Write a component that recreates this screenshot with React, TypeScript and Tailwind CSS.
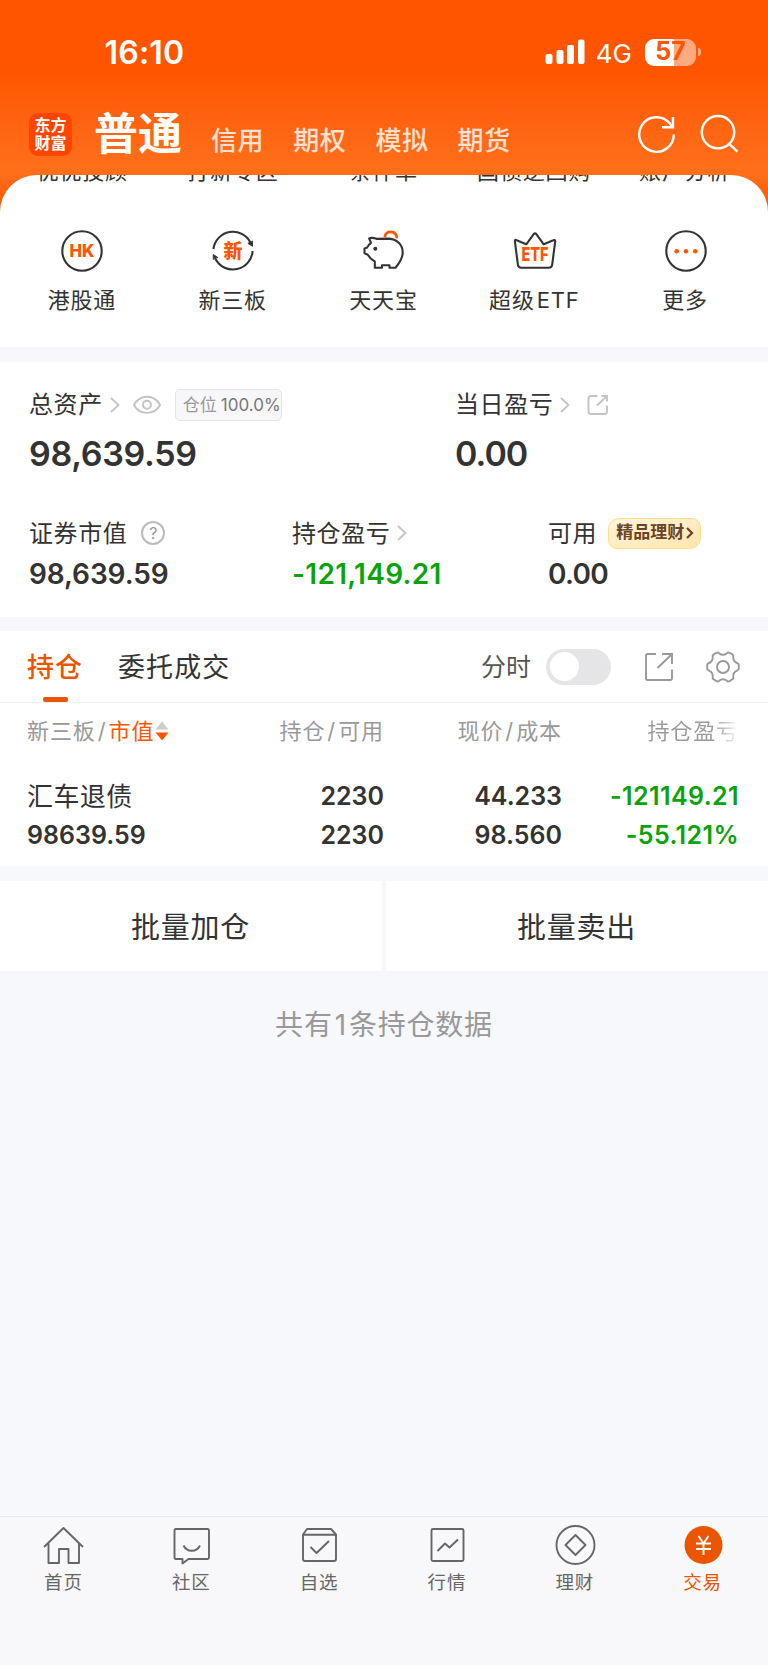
import type { ReactNode } from "react";

const accountTabs = ["信用", "期权", "模拟", "期货"];
const hiddenRow = ["优优投顾", "打新专区", "条件单", "国债逆回购", "账户分析"];

function StatusBar() {
  return (
    <div className="flex h-[104px] items-center pr-[67px] pl-[104.5px] text-white">
      <span className="pt-0.5 text-[32px] leading-10 font-semibold tracking-[0.2px]">16:10</span>
      <svg className="ml-auto" width="40" height="26" viewBox="0 0 40 26" fill="currentColor">
        <rect x="0.5" y="15" width="7" height="10" rx="2" />
        <rect x="11.5" y="11" width="7" height="14" rx="2" />
        <rect x="22" y="6" width="7" height="19" rx="2" />
        <rect x="33" y="0.5" width="6.5" height="24.5" rx="2" />
      </svg>
      <span className="ml-[11px] pt-[3px] text-[26px] leading-8">4G</span>
      <div className="ml-[13px] flex h-[27px] w-[51px] items-center justify-center rounded-[9px] bg-linear-to-r from-white from-57% to-white/50 to-57% text-[25px] font-bold text-[#ff5500]">
        57
      </div>
      <div className="ml-0.5 h-2 w-[3px] rounded-r-full bg-white/50" />
    </div>
  );
}

function Header() {
  return (
    <header className="h-[175px] bg-linear-to-b from-[#ff5500] from-40% to-[#ff6e19] to-95%">
      <StatusBar />
      <div className="flex h-[60px] items-center pr-[28px] pl-[29px] text-white">
        <div className="flex size-[43px] flex-col items-center justify-center rounded-[9px] bg-[#ff4400] text-[16px] leading-[18px] font-bold">
          <span>东方</span>
          <span>财富</span>
        </div>
        <h1 className="ml-[22px] text-[44px] leading-[44px] font-bold">普通</h1>
        <nav className="ml-[29px] flex gap-[29px] pt-[13px]">
          {accountTabs.map((t) => (
            <span key={t} className="text-[26px] leading-[30px] font-medium tracking-[0.6px] text-white/80">
              {t}
            </span>
          ))}
        </nav>
        <svg className="ml-auto" width="40" height="40" viewBox="0 0 40 40" fill="none" stroke="currentColor" strokeWidth="2.4">
          <path d="M36.8 20.5A17.3 17.3 0 1 1 32.3 8.9L36 13.2" />
          <path d="M36 3v10.2H25" />
        </svg>
        <svg className="ml-[23px]" width="40" height="40" viewBox="0 0 40 40" fill="none" stroke="currentColor" strokeWidth="2.4">
          <circle cx="18" cy="18.2" r="16.2" />
          <path d="M29.2 29.8 37.4 37.6" />
        </svg>
      </div>
    </header>
  );
}

function EntryIcon({ children }: { children: ReactNode }) {
  return (
    <svg width="44" height="44" viewBox="0 0 44 44" fill="none" stroke="#333" strokeWidth="2.1" strokeLinejoin="round" strokeLinecap="round">
      {children}
    </svg>
  );
}

const entries: { label: ReactNode; icon: ReactNode }[] = [
  {
    label: "港股通",
    icon: (
      <EntryIcon>
        <circle cx="22" cy="22" r="19.7" />
        <text x="22" y="28.4" textAnchor="middle" fontSize="18" fontWeight="800" fill="#ff5500" stroke="none" textLength="25" lengthAdjust="spacingAndGlyphs">
          HK
        </text>
      </EntryIcon>
    ),
  },
  {
    label: "新三板",
    icon: (
      <EntryIcon>
        <path d="M2.4 20A19.7 19.7 0 0 1 39.5 13.5" strokeLinecap="butt" />
        <path d="M41.6 22A19.7 19.7 0 0 1 4.5 30" strokeLinecap="butt" />
        <path d="m37.2 14.5 4.3 2.8V12.5z" fill="#333" strokeWidth="1" />
        <path d="M2.3 30V25.5l4.2 2.8z" fill="#333" strokeWidth="1" />
        <text x="22" y="29" textAnchor="middle" fontSize="19" fontWeight="900" fill="#ff5500" stroke="none">
          新
        </text>
      </EntryIcon>
    ),
  },
  {
    label: "天天宝",
    icon: (
      <EntryIcon>
        <path d="M7.2 9.5C9.5 8.5 12 8.8 14.5 9.9L27 9.6C35.5 10.5 40.7 16 40.7 23.5C40.7 29 37.5 34 33.5 38.7H27.5V36.2H20V38.7H12.8V32.5C9.5 30.8 7.3 28.5 5.8 25.8L2.5 24.3V19.5L5.2 18.5C5.9 16.5 7 15.2 9 13.8Z" />
        <circle cx="13.3" cy="19.8" r="2" fill="#333" stroke="none" />
        <path d="M23 7.2C23.8 1.2 33.8 1.2 34.8 8.2" stroke="#ff5500" strokeWidth="2.8" />
      </EntryIcon>
    ),
  },
  {
    label: (
      <>
        超级<span className="ml-0.5">ETF</span>
      </>
    ),
    icon: (
      <EntryIcon>
        <path d="M1.9 12.3C1.7 11 2.7 10.6 3.6 11.2L13.3 15.3 20.7 5.2C21.5 4.1 22.5 4.1 23.3 5.2L30.7 15.3 40.4 11.2C41.5 10.7 42.4 11.3 42.2 12.5L39.2 35.6C38.9 37.8 38 38.8 35.8 38.8H8.3C6.1 38.8 5.2 37.8 4.9 35.6Z" />
        <text x="22" y="32" textAnchor="middle" fontSize="19" fontWeight="800" fill="#ff5500" stroke="none" textLength="27" lengthAdjust="spacingAndGlyphs">
          ETF
        </text>
      </EntryIcon>
    ),
  },
  {
    label: "更多",
    icon: (
      <EntryIcon>
        <circle cx="22" cy="22" r="19.7" />
        <g fill="#ff5500" stroke="none">
          <circle cx="12.7" cy="22.3" r="2.3" />
          <circle cx="22" cy="22.3" r="2.3" />
          <circle cx="31.3" cy="22.3" r="2.3" />
        </g>
      </EntryIcon>
    ),
  },
];

function QuickEntries() {
  return (
    <div className="bg-linear-to-b from-[#ff6d18] to-[#ff5500] to-20%">
      <section className="h-[172px] overflow-hidden rounded-t-[37px] bg-white px-[7px]">
        <div className="-mt-[15px] grid grid-cols-5 pr-px text-center text-[22px] leading-[22px] tracking-[0.8px]">
          {hiddenRow.map((label) => (
            <span key={label} className="whitespace-nowrap">{label}</span>
          ))}
        </div>
        <div className="mt-[47px] grid grid-cols-5">
          {entries.map((e, i) => (
            <div key={i} className="flex flex-col items-center">
              {e.icon}
              <span className="mt-4 pr-px text-[22px] leading-[22px] tracking-[0.8px]">{e.label}</span>
            </div>
          ))}
        </div>
      </section>
    </div>
  );
}

function Chevron() {
  return (
    <svg width="10" height="16" viewBox="0 0 10 16" fill="none" stroke="#c4c4c4" strokeWidth="1.8">
      <path d="m1 1 7.5 7L1 15" />
    </svg>
  );
}

function Assets() {
  return (
    <section className="mt-[15px] h-[255px] bg-white px-[29px] pt-[27px]">
      <div className="flex">
        <div className="w-[426px]">
          <div className="flex h-8 items-center">
            <span className="text-[24px] tracking-[0.6px]">总资产</span>
            <span className="ml-[7px]"><Chevron /></span>
            <svg className="ml-[13px]" width="28" height="20" viewBox="0 0 28 20" fill="none" stroke="#c4c4c4" strokeWidth="1.9">
              <path d="M1 10C6.5-1 21.5-1 27 10C21.5 20.5 6.5 20.5 1 10Z" />
              <circle cx="14" cy="9.7" r="4" />
            </svg>
            <span className="ml-[14px] flex h-8 w-[107px] items-center rounded-[5px] border border-[#e4e4e8] bg-[#f7f7fa] pt-px pl-[7px] text-[17px] whitespace-nowrap text-[#999]">
              仓位<span className="ml-1 text-[#777]">100.0%</span>
            </span>
          </div>
          <div className="mt-[13px] text-[34px] leading-10 font-semibold tracking-[-0.3px]">98,639.59</div>
        </div>
        <div>
          <div className="flex h-8 items-center">
            <span className="text-[24px] tracking-[0.6px]">当日盈亏</span>
            <span className="ml-[7px]"><Chevron /></span>
            <svg className="ml-[17px]" width="22" height="22" viewBox="0 0 22 22" fill="none" stroke="#c4c4c4" strokeWidth="1.9">
              <path d="M10.5 2H4A2.5 2.5 0 0 0 1.5 4.5V17.5A2.5 2.5 0 0 0 4 20H17.5A2.5 2.5 0 0 0 20 17.5V11.5" />
              <path d="M10 11.5 20 2M14.5 2H20V7.5" />
            </svg>
          </div>
          <div className="mt-[13px] text-[34px] leading-10 font-semibold tracking-[-1px]">0.00</div>
        </div>
      </div>
      <div className="mt-[43px] flex">
        <div className="w-[263px]">
          <div className="flex h-8 items-center">
            <span className="pt-px text-[24px] tracking-[0.6px]">证券市值</span>
            <span className="ml-[14px] flex size-[24px] items-center justify-center rounded-full border-2 border-[#bbb] text-[16px] leading-none text-[#999]">?</span>
          </div>
          <div className="mt-[9px] text-[28px] leading-8 font-semibold tracking-[-0.1px]">98,639.59</div>
        </div>
        <div className="w-[256px]">
          <div className="flex h-8 items-center">
            <span className="pt-px text-[24px] tracking-[0.6px]">持仓盈亏</span>
            <span className="ml-[7px]"><Chevron /></span>
          </div>
          <div className="mt-[9px] text-[28px] leading-8 font-semibold tracking-[0.3px] text-[#0aa30a]">-121,149.21</div>
        </div>
        <div>
          <div className="flex h-8 items-center">
            <span className="pt-px text-[24px] tracking-[0.6px]">可用</span>
            <span className="ml-[11px] flex h-[31px] w-[93px] items-center rounded-[9px] rounded-tl-[11px] rounded-br-[11px] border-[1.5px] border-[#fbe08a] bg-linear-to-br from-[#fff3dc] to-[#ffe6ae] pl-[7px] text-[17px] font-bold whitespace-nowrap text-[#6b4423]">
              精品理财
              <svg className="ml-0.5" width="8" height="12" viewBox="0 0 8 12" fill="none" stroke="currentColor" strokeWidth="2.2">
                <path d="m1 1 5 5-5 5" />
              </svg>
            </span>
          </div>
          <div className="mt-[9px] text-[28px] leading-8 font-semibold tracking-[-0.7px]">0.00</div>
        </div>
      </div>
    </section>
  );
}

function Positions() {
  return (
    <section className="mt-[14px] h-[235px] bg-white">
      <div className="flex h-[72px] items-center border-b border-[#f0f0f2] pr-[28px] pl-[27px]">
        <div className="relative pt-0.5 text-[27px] leading-9 font-medium tracking-[1px] text-[#eb5500]">
          持仓
          <span className="absolute top-[49px] left-4 h-[5px] w-[25px] rounded-[2px] bg-[#eb5500]" />
        </div>
        <span className="ml-[35px] pt-0.5 text-[27px] leading-9 tracking-[1.1px]">委托成交</span>
        <span className="ml-auto pt-0.5 text-[25px] text-[#555]">分时</span>
        <span className="ml-[15px] flex h-9 w-[65px] items-center rounded-full bg-[#e5e5e7] px-1">
          <span className="size-[29px] rounded-full bg-white" />
        </span>
        <svg className="ml-[33px]" width="30" height="30" viewBox="0 0 30 30" fill="none" stroke="#999" strokeWidth="1.9">
          <path d="M12 2H3.5A1.5 1.5 0 0 0 2 3.5V26.5A1.5 1.5 0 0 0 3.5 28H26.5A1.5 1.5 0 0 0 28 26.5V17.5" />
          <path d="M13.5 16 28 2M18 2H28V12" />
        </svg>
        <svg className="ml-[32px]" width="34" height="34" viewBox="0 0 34 34" fill="none" stroke="#999" strokeWidth="1.9" strokeLinejoin="round">
          <path d="M13 3.2C15.5 5.2 18.5 5.2 21 3.2Q22 2 23.5 2.8L26.3 4.4Q27.8 5.3 27.3 7C27.1 10 28.5 12 31 13Q32.8 13.7 32.8 15V18.5Q32.8 20 31 20.7C28.5 21.8 27.1 24 27.3 26.5Q27.8 28.5 26.3 29.3L23.5 31.2Q22 32 21 30.8C18.5 28.8 15.5 28.8 13 30.8Q12 32 10.5 31.2L7.7 29.3Q6.2 28.5 6.7 26.5C6.9 24 5.5 21.8 3 20.7Q1.2 20 1.2 18.5V15Q1.2 13.7 3 13C5.5 12 6.9 10 6.7 7Q6.2 5.3 7.7 4.4L10.5 2.8Q12 2 13 3.2Z" />
          <circle cx="17" cy="17" r="6" />
        </svg>
      </div>
      <div className="grid grid-cols-[187px_170px_178px_177px] pt-3 pr-[29px] pl-[27px] text-[22px] leading-8 tracking-[0.9px] whitespace-nowrap text-[#999]">
        <span className="flex items-center">
          新三板<span className="mx-0.5">/</span><span className="text-[#ff5500]">市值</span>
          <svg className="ml-px" width="14" height="20" viewBox="0 0 14 20">
            <path d="M0.5 8.5 7 0.5 13.5 8.5Z" fill="#ccc" />
            <path d="M0.5 11.5H13.5L7 19.5Z" fill="#ff5500" />
          </svg>
        </span>
        <span className="text-right">持仓<span className="mx-0.5">/</span>可用</span>
        <span className="text-right">现价<span className="mx-0.5">/</span>成本</span>
        <span className="flex justify-end">
          <span className="bg-linear-to-r from-[#999] from-72% to-white to-100% bg-clip-text text-transparent">持仓盈亏</span>
        </span>
      </div>
      <div className="grid grid-cols-[187px_170px_178px_177px] pt-[30px] pr-[29px] pl-[27px] text-right text-[25px] leading-[39px] font-semibold">
        <div className="text-left">
          <div className="text-[26px] font-normal tracking-[0.4px]">汇车退债</div>
          <div>98639.59</div>
        </div>
        <div>
          <div>2230</div>
          <div>2230</div>
        </div>
        <div>
          <div>44.233</div>
          <div>98.560</div>
        </div>
        <div className="tracking-[0.4px] text-[#0aa30a]">
          <div>-121149.21</div>
          <div>-55.121%</div>
        </div>
      </div>
    </section>
  );
}

const tabs: { label: string; icon: ReactNode; active?: boolean }[] = [
  {
    label: "首页",
    icon: <path d="M1 21 20.5 2 40 21M5.5 17V37H16V23H25.5V37H36V17" />,
  },
  {
    label: "社区",
    icon: (
      <>
        <path d="M4.5 3H36.5A1.5 1.5 0 0 1 38 4.5V31.5A1.5 1.5 0 0 1 36.5 33H17.5L11.5 37.5V33H4.5A1.5 1.5 0 0 1 3.5 31.5V4.5A1.5 1.5 0 0 1 4.5 3Z" />
        <path d="M12.5 19.5C16 26.5 25.5 26.5 29 19.5" />
      </>
    ),
  },
  {
    label: "自选",
    icon: (
      <>
        <path d="M4 8.5 8 3H32L37 8.5V33A2 2 0 0 1 35 35H6A2 2 0 0 1 4 33ZM4 8.7H37" />
        <path d="M11.5 21 17.5 27 30 15" />
      </>
    ),
  },
  {
    label: "行情",
    icon: (
      <>
        <rect x="4.5" y="3" width="32" height="32" rx="1.5" />
        <path d="M10.5 25 18 17.5 22.5 21.5 31 13.5" />
      </>
    ),
  },
  {
    label: "理财",
    icon: (
      <>
        <circle cx="20.5" cy="19" r="19" />
        <path d="M20.5 9 30.5 19 20.5 29 10.5 19Z" />
      </>
    ),
  },
  {
    label: "交易",
    active: true,
    icon: (
      <>
        <circle cx="20.5" cy="19" r="19" fill="#eb5500" stroke="none" />
        <path d="M15.5 10 20.5 17.5 25.5 10M20.5 17.5V29M13 17.5H28M13 23H28" stroke="#fff" />
      </>
    ),
  },
];

function TabBar() {
  return (
    <nav className="mt-auto grid h-[149px] grid-cols-6 border-t border-[#e8e8ea] bg-[#f8f8fb] pt-[9px] pr-px">
      {tabs.map((t) => (
        <div key={t.label} className="flex flex-col items-center">
          <svg className="overflow-visible" width="41" height="38" viewBox="0 0 41 38" fill="none" stroke="#666" strokeWidth="1.9" strokeLinejoin="round">
            {t.icon}
          </svg>
          <span className={`mt-2 pr-px text-[18.5px] leading-5 tracking-[0.8px] ${t.active ? "text-[#eb5500]" : "text-[#666]"}`}>
            {t.label}
          </span>
        </div>
      ))}
    </nav>
  );
}

export default function App() {
  return (
    <div className="flex h-[1665px] w-[768px] flex-col overflow-hidden bg-[#f7f8fb] font-[Inter,'Noto_Sans_CJK_SC',sans-serif] text-[#333]">
      <Header />
      <QuickEntries />
      <Assets />
      <Positions />
      <div className="mt-[15px] flex h-[90px] gap-1 text-[29px] tracking-[0.7px]">
        <button className="w-[382px] bg-white pt-[3px] pr-px">批量加仓</button>
        <button className="w-[382px] bg-white pt-[3px] pr-px">批量卖出</button>
      </div>
      <p className="mt-9 text-center text-[28px] leading-9 tracking-[0.8px] text-[#999]">
        共有<span className="mx-0.5">1</span>条持仓数据
      </p>
      <TabBar />
    </div>
  );
}
